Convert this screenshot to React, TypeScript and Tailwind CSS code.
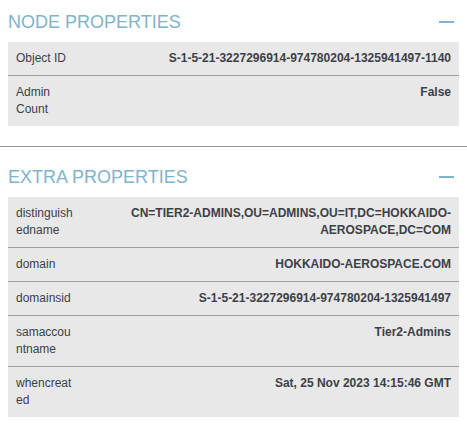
import React from 'react';

type Row = { label: string; value: string };

const nodeRows: Row[] = [
  { label: 'Object ID', value: 'S-1-5-21-3227296914-974780204-1325941497-1140' },
  { label: 'Admin Count', value: 'False' },
];

const extraRows: Row[] = [
  { label: 'distinguishedname', value: 'CN=TIER2-ADMINS,OU=ADMINS,OU=IT,DC=HOKKAIDO-AEROSPACE,DC=COM' },
  { label: 'domain', value: 'HOKKAIDO-AEROSPACE.COM' },
  { label: 'domainsid', value: 'S-1-5-21-3227296914-974780204-1325941497' },
  { label: 'samaccountname', value: 'Tier2-Admins' },
  { label: 'whencreated', value: 'Sat, 25 Nov 2023 14:15:46 GMT' },
];

function SectionHeader({ title }: { title: string }) {
  return (
    <div className="flex items-center justify-between pl-2 pr-[13px] h-5 mb-[10px]">
      <span className="text-[18px] leading-5 text-[#80b3cb]">{title}</span>
      {/* collapse */}
      <span className="block w-[15px] h-[2px] bg-[#80b3cb]" />
    </div>
  );
}

function PropTable({ rows }: { rows: Row[] }) {
  return (
    <div className="mx-2 bg-[#e8e8e8] text-[12px] leading-[17px] text-[#3d4047]">
      {rows.map((r, i) => (
        <div
          key={r.label}
          className={`grid grid-cols-[75px_1fr] ${i > 0 ? 'border-t border-[#9e9e9e]' : ''}`}
        >
          <div className="px-2 py-2 [overflow-wrap:anywhere]">{r.label}</div>
          <div className="px-2 py-2 text-right font-bold">{r.value}</div>
        </div>
      ))}
    </div>
  );
}

export default function App() {
  return (
    <div className="w-[467px] h-[426px] bg-white font-['Liberation_Sans',Arial,sans-serif] overflow-hidden">
      <div className="pt-[12px]">
        <SectionHeader title="NODE PROPERTIES" />
        <PropTable rows={nodeRows} />
      </div>
      <div className="mt-[20px] border-t border-[#999999] pt-[20px]">
        <SectionHeader title="EXTRA PROPERTIES" />
        <PropTable rows={extraRows} />
      </div>
    </div>
  );
}
